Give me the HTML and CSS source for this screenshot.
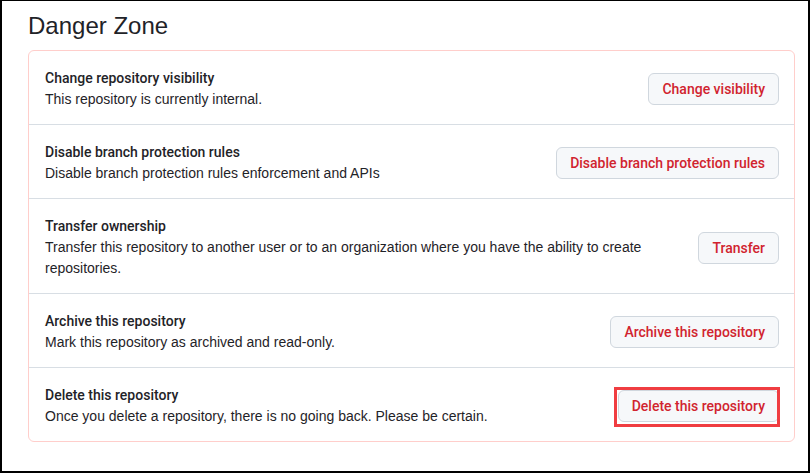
FILE: index.html
```html
<!DOCTYPE html>
<html lang="en">
<head>
<meta charset="utf-8">
<title>Danger Zone</title>
<link rel="stylesheet" href="styles.css">
</head>
<body>
<div class="page">
  <h2 class="heading">Danger Zone</h2>
  <div class="danger-box">
    <div class="row">
      <div class="info">
        <div class="title">Change repository visibility</div>
        <div class="desc">This repository is currently internal.</div>
      </div>
      <button class="btn">Change visibility</button>
    </div>
    <div class="row">
      <div class="info">
        <div class="title">Disable branch protection rules</div>
        <div class="desc">Disable branch protection rules enforcement and APIs</div>
      </div>
      <button class="btn">Disable branch protection rules</button>
    </div>
    <div class="row">
      <div class="info">
        <div class="title">Transfer ownership</div>
        <div class="desc">Transfer this repository to another user or to an organization where you have the ability to create repositories.</div>
      </div>
      <button class="btn">Transfer</button>
    </div>
    <div class="row">
      <div class="info">
        <div class="title">Archive this repository</div>
        <div class="desc">Mark this repository as archived and read-only.</div>
      </div>
      <button class="btn">Archive this repository</button>
    </div>
    <div class="row">
      <div class="info">
        <div class="title">Delete this repository</div>
        <div class="desc">Once you delete a repository, there is no going back. Please be certain.</div>
      </div>
      <div class="btn-wrap">
        <button class="btn">Delete this repository</button>
        <span class="highlight"></span>
      </div>
    </div>
  </div>
</div>
</body>
</html>
```
FILE: styles.css
```css
html, body {
  margin: 0;
  padding: 0;
  background: #ffffff;
}
.page {
  box-sizing: border-box;
  width: 810px;
  height: 473px;
  border-top: 1px solid #000;
  border-left: 2px solid #000;
  border-right: 2px solid #000;
  border-bottom: 2px solid #000;
  padding: 10px 13px 0 26px;
  font-family: "Liberation Sans", Arial, sans-serif;
  color: #1f2328;
}
.heading {
  margin: 0 0 9px 0;
  font-size: 24px;
  line-height: 30px;
  font-weight: 400;
}
.danger-box {
  border: 1px solid #ffcecb;
  border-radius: 6px;
}
.row {
  display: flex;
  align-items: center;
  gap: 16px;
  padding: 17px 15px 14px 16px;
  border-top: 1px solid #d8dee4;
}
.row:first-child {
  border-top: none;
}
.info {
  flex: 1;
  min-width: 0;
}
.title {
  font-family: Roboto, "Liberation Sans", sans-serif;
  font-weight: 500;
  font-size: 14px;
  line-height: 21px;
}
.desc {
  font-size: 14px;
  line-height: 21px;
}
.btn {
  flex: none;
  box-sizing: border-box;
  height: 32px;
  padding: 0 13px;
  background: #f6f8fa;
  border: 1px solid #d0d7de;
  border-radius: 6px;
  color: #d1242f;
  font-family: Roboto, "Liberation Sans", sans-serif;
  font-weight: 500;
  font-size: 14px;
  line-height: 30px;
  white-space: nowrap;
  cursor: pointer;
}
.btn-wrap {
  position: relative;
  flex: none;
  display: flex;
}
.highlight {
  position: absolute;
  left: -4px;
  right: -1px;
  top: -3px;
  bottom: -5px;
  border: 3px solid #f03d41;
  pointer-events: none;
}
```
